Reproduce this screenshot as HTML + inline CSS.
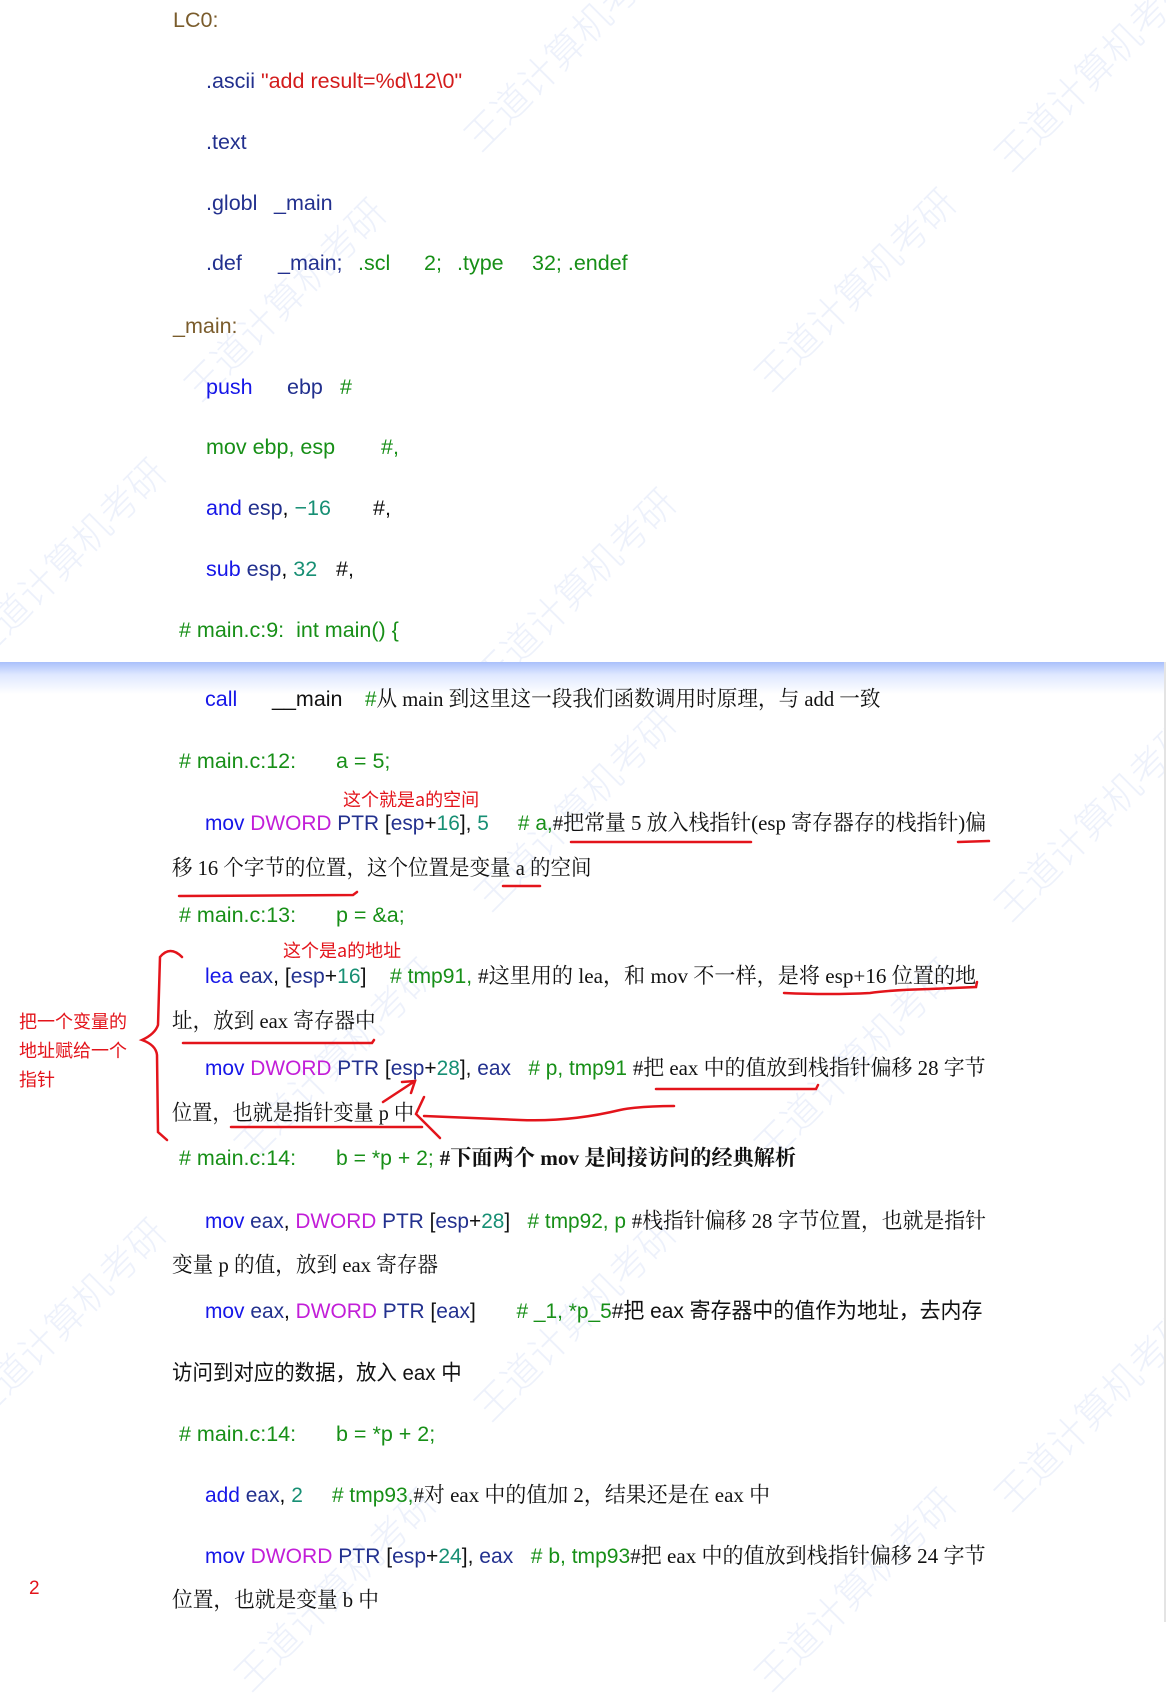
<!DOCTYPE html>
<html><head><meta charset="utf-8">
<style>
html,body{margin:0;padding:0;background:#fff;}
body{width:1166px;height:1622px;position:relative;overflow:hidden;font-family:"Liberation Sans","Noto Sans CJK SC",sans-serif;font-size:21.5px;}
.l{position:absolute;white-space:nowrap;line-height:24px;height:24px;}
.c span.in{display:inline-block;transform-origin:0 0;white-space:nowrap;}
.s{font-family:"Liberation Serif","Noto Serif CJK SC",serif;}
.b{color:#1616e8}.n{color:#22308e}.g{color:#178f17}.t{color:#178f74}.m{color:#c21ed8}.r{color:#d31c1c}.o{color:#7a5c2c}.k{color:#111}
.wm{position:absolute;color:rgba(150,170,230,0.17);font-family:"Noto Sans CJK SC",sans-serif;font-size:38px;font-weight:300;transform:rotate(-45deg);white-space:nowrap;}
.ann{position:absolute;color:#e3141b;font-family:"Noto Sans CJK SC",sans-serif;font-size:18px;line-height:29px;white-space:nowrap;}
</style></head><body>
<div class="wm" style="left:430px;top:20px">王道计算机考研</div>
<div class="wm" style="left:960px;top:40px">王道计算机考研</div>
<div class="wm" style="left:150px;top:270px">王道计算机考研</div>
<div class="wm" style="left:720px;top:260px">王道计算机考研</div>
<div class="wm" style="left:-70px;top:530px">王道计算机考研</div>
<div class="wm" style="left:440px;top:560px">王道计算机考研</div>
<div class="wm" style="left:440px;top:780px">王道计算机考研</div>
<div class="wm" style="left:960px;top:790px">王道计算机考研</div>
<div class="wm" style="left:200px;top:1030px">王道计算机考研</div>
<div class="wm" style="left:720px;top:1030px">王道计算机考研</div>
<div class="wm" style="left:-70px;top:1290px">王道计算机考研</div>
<div class="wm" style="left:440px;top:1290px">王道计算机考研</div>
<div class="wm" style="left:960px;top:1380px">王道计算机考研</div>
<div class="wm" style="left:200px;top:1560px">王道计算机考研</div>
<div class="wm" style="left:720px;top:1560px">王道计算机考研</div>

<div class="l o" style="left:173px;top:8px">LC0:</div>
<div class="l" style="left:206px;top:69px"><span class="n">.ascii</span> <span class="r">"add result=%d\12\0"</span></div>
<div class="l n" style="left:206px;top:130px">.text</div>
<div class="l n" style="left:206px;top:191px">.globl</div><div class="l n" style="left:274px;top:191px">_main</div>
<div class="l n" style="left:206px;top:251px">.def</div>
<div class="l n" style="left:278px;top:251px">_main;</div>
<div class="l g" style="left:358px;top:251px">.scl</div>
<div class="l g" style="left:424px;top:251px">2;</div>
<div class="l g" style="left:457px;top:251px">.type</div>
<div class="l g" style="left:532px;top:251px">32; .endef</div>
<div class="l o" style="left:173px;top:314px">_main:</div>
<div class="l b" style="left:206px;top:375px">push</div><div class="l n" style="left:287px;top:375px">ebp</div><div class="l g" style="left:340px;top:375px">#</div>
<div class="l g" style="left:206px;top:435px">mov ebp, esp</div><div class="l g" style="left:381px;top:435px">#,</div>
<div class="l" style="left:206px;top:496px"><span class="b">and</span> <span class="n">esp</span>, <span class="t">−16</span></div><div class="l k" style="left:373px;top:496px">#,</div>
<div class="l" style="left:206px;top:557px"><span class="b">sub</span> <span class="n">esp</span>, <span class="t">32</span></div><div class="l k" style="left:336px;top:557px">#,</div>
<div class="l g" style="left:179px;top:618px"># main.c:9:&nbsp; int main() {</div>

<div style="position:absolute;left:0;top:662px;width:1166px;height:32px;background:linear-gradient(#a9c0fb,#dfe8ff 40%,#fff)"></div>
<div style="position:absolute;left:1164px;top:662px;width:2px;height:960px;background:#e4e4e4"></div>

<div class="l b" style="left:205px;top:687px">call</div>
<div class="l k" style="left:272px;top:687px">__main</div>
<div class="l c" style="left:365px;top:687px;width:516px"><span class="in"><span class="g">#</span><span class="s k">从 main 到这里这一段我们函数调用时原理，与 add 一致</span></span></div>

<div class="l g" style="left:179px;top:749px"># main.c:12:</div><div class="l g" style="left:336px;top:749px">a = 5;</div>
<div class="l c" style="left:205px;top:811px;width:781px"><span class="in"><span class="b">mov</span> <span class="m">DWORD</span> <span class="n">PTR</span> <span class="k">[</span><span class="n">esp</span><span class="k">+</span><span class="t">16</span><span class="k">],</span> <span class="t">5</span>&nbsp;&nbsp;&nbsp;&nbsp; <span class="g"># a,</span><span class="s k">#把常量 5 放入栈指针(esp 寄存器存的栈指针)偏</span></span></div>
<div class="l c s k" style="left:172px;top:856px;width:420px"><span class="in">移 16 个字节的位置，这个位置是变量 a 的空间</span></div>

<div class="l g" style="left:179px;top:903px"># main.c:13:</div><div class="l g" style="left:336px;top:903px">p = &amp;a;</div>
<div class="l c" style="left:205px;top:964px;width:771px"><span class="in"><span class="b">lea</span> <span class="n">eax</span>, <span class="k">[</span><span class="n">esp</span><span class="k">+</span><span class="t">16</span><span class="k">]</span>&nbsp;&nbsp;&nbsp; <span class="g"># tmp91, </span><span class="s k">#这里用的 lea，和 mov 不一样，是将 esp+16 位置的地</span></span></div>
<div class="l c s k" style="left:172px;top:1009px;width:204px"><span class="in">址，放到 eax 寄存器中</span></div>
<div class="l c" style="left:205px;top:1056px;width:781px"><span class="in"><span class="b">mov</span> <span class="m">DWORD</span> <span class="n">PTR</span> <span class="k">[</span><span class="n">esp</span><span class="k">+</span><span class="t">28</span><span class="k">],</span> <span class="n">eax</span>&nbsp;&nbsp; <span class="g"># p, tmp91 </span><span class="s k">#把 eax 中的值放到栈指针偏移 28 字节</span></span></div>
<div class="l c s k" style="left:172px;top:1101px;width:242px"><span class="in">位置，也就是指针变量 p 中</span></div>

<div class="l g" style="left:179px;top:1146px"># main.c:14:</div>
<div class="l c" style="left:336px;top:1146px;width:460px"><span class="in"><span class="g">b = *p + 2; </span><span class="s k" style="font-weight:bold">#下面两个 mov 是间接访问的经典解析</span></span></div>
<div class="l c" style="left:205px;top:1209px;width:781px"><span class="in"><span class="b">mov</span> <span class="n">eax</span>, <span class="m">DWORD</span> <span class="n">PTR</span> <span class="k">[</span><span class="n">esp</span><span class="k">+</span><span class="t">28</span><span class="k">]</span>&nbsp;&nbsp; <span class="g"># tmp92, p </span><span class="s k">#栈指针偏移 28 字节位置，也就是指针</span></span></div>
<div class="l c s k" style="left:172px;top:1253px;width:266px"><span class="in">变量 p 的值，放到 eax 寄存器</span></div>
<div class="l c" style="left:205px;top:1299px;width:777px"><span class="in"><span class="b">mov</span> <span class="n">eax</span>, <span class="m">DWORD</span> <span class="n">PTR</span> <span class="k">[</span><span class="n">eax</span><span class="k">]</span>&nbsp;&nbsp;&nbsp;&nbsp;&nbsp;&nbsp; <span class="g"># _1, *p_5</span><span class="k">#把 eax 寄存器中的值作为地址，去内存</span></span></div>
<div class="l c k" style="left:172px;top:1361px;width:290px"><span class="in">访问到对应的数据，放入 eax 中</span></div>
<div class="l g" style="left:179px;top:1422px"># main.c:14:</div><div class="l g" style="left:336px;top:1422px">b = *p + 2;</div>
<div class="l c" style="left:205px;top:1483px;width:565px"><span class="in"><span class="b">add</span> <span class="n">eax</span>, <span class="t">2</span>&nbsp;&nbsp;&nbsp;&nbsp; <span class="g"># tmp93,</span><span class="s k">#对 eax 中的值加 2，结果还是在 eax 中</span></span></div>
<div class="l c" style="left:205px;top:1544px;width:781px"><span class="in"><span class="b">mov</span> <span class="m">DWORD</span> <span class="n">PTR</span> <span class="k">[</span><span class="n">esp</span><span class="k">+</span><span class="t">24</span><span class="k">],</span> <span class="n">eax</span>&nbsp;&nbsp; <span class="g"># b, tmp93</span><span class="s k">#把 eax 中的值放到栈指针偏移 24 字节</span></span></div>
<div class="l c s k" style="left:172px;top:1588px;width:207px"><span class="in">位置，也就是变量 b 中</span></div>
<div class="l" style="left:29px;top:1577px;color:#e3141b;font-size:19px">2</div>

<div class="ann" style="left:343px;top:785px">这个就是a的空间</div>
<div class="ann" style="left:283px;top:936px">这个是a的地址</div>
<div class="ann" style="left:19px;top:1007px">把一个变量的<br>地址赋给一个<br>指针</div>
<svg style="position:absolute;left:0;top:0" width="1166" height="1622" fill="none" stroke="#e3141b" stroke-width="2.5" stroke-linecap="round">
<path d="M571 842 L751 842"/>
<path d="M958 842 L989 841"/>
<path d="M179 896 L353 895 L357 892"/>
<path d="M503 886 L540 886"/>
<path d="M784 993 Q830 995 870 993 Q890 990 930 989 L976 987 L977 982"/>
<path d="M183 1043 L372 1043 L374 1040"/>
<path d="M656 1089 L816 1089 L818 1085"/>
<path d="M231 1127 L422 1127"/>
<path d="M674 1106 Q640 1106 620 1110 Q570 1122 520 1120 L424 1116"/>
<path d="M424 1097 L416 1114 L440 1138"/>
<path d="M383 1102 L415 1081 M402 1082 L415 1081 L411 1093"/>
<path d="M182 957 Q170 945 160 957 L158 1025 Q155 1034 142 1040 Q156 1045 157 1055 L158 1132 L167 1140"/>
</svg>

<script>
document.querySelectorAll('.c').forEach(function(d){
  var s=d.querySelector('.in'); var w=parseFloat(d.style.width); var sw=s.offsetWidth;
  if(sw>0&&w>0){s.style.transform='scaleX('+(w/sw)+')';}
});
</script>
</body></html>
